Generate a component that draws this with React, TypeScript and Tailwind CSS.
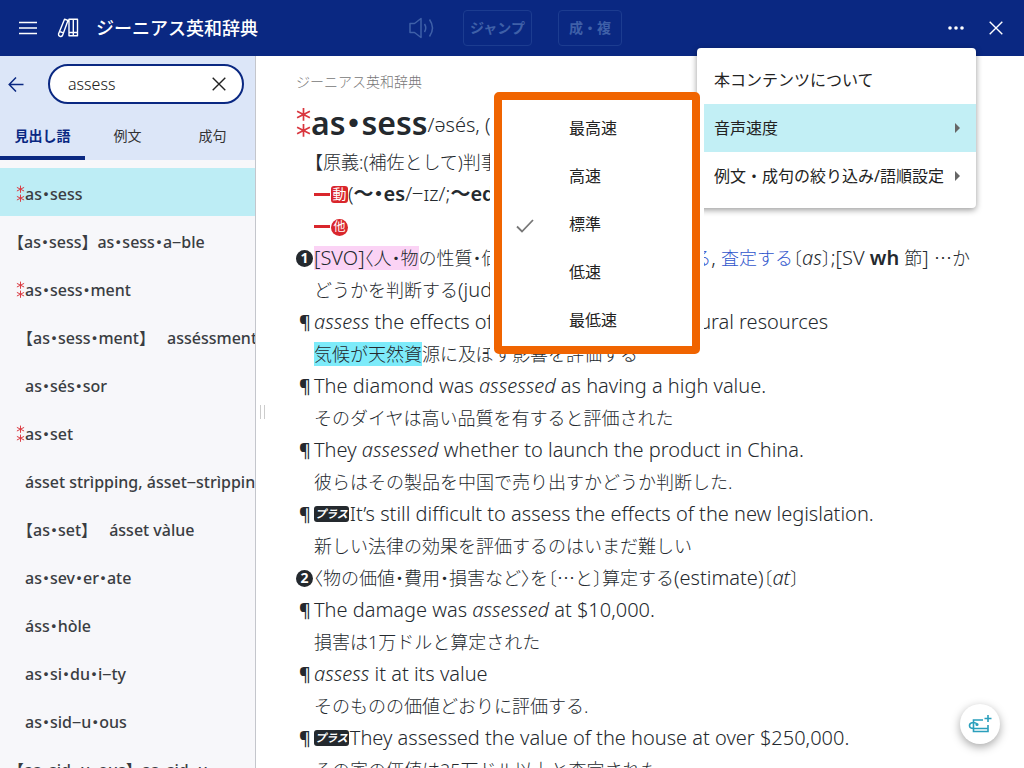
import React from 'react';

interface Entry {
    label: string;
    starred?: boolean;
    outdent?: boolean;
}

const entries: Entry[] = [
    { label: 'as・sess', starred: true },
    { label: '【as・sess】\u2002as・sess・a‒ble', outdent: true },
    { label: 'as・sess・ment', starred: true },
    { label: '【as・sess・ment】　 asséssment' },
    { label: 'as・sés・sor' },
    { label: 'as・set', starred: true },
    { label: 'ásset strìpping, ásset‒strìpping' },
    { label: '【as・set】　 ásset vàlue' },
    { label: 'as・sev・er・ate' },
    { label: 'áss・hòle' },
    { label: 'as・si・du・i‒ty' },
    { label: 'as・sid‒u・ous' },
    { label: '【as・sid‒u・ous】\u2002as・sid‒u', outdent: true },
];

const speeds = ['最高速', '高速', '標準', '低速', '最低速'];

const StarMark: React.FC<{ className: string }> = ({ className }) => (
    <svg viewBox="0 0 14 30" fill="none" stroke="#d9363e" strokeWidth="1.6" className={className} aria-hidden="true">
        <path d="M7 1v12M1 4l12 6M13 4l-12 6M7 16v12M1 19l12 6M13 19l-12 6" />
    </svg>
);

const CloseIcon: React.FC<{ className: string }> = ({ className }) => (
    <svg viewBox="0 0 14 14" fill="none" stroke="currentColor" strokeWidth="1.4" className={className} aria-hidden="true">
        <path d="M.7.7l12.6 12.6M13.3.7L.7 13.3" />
    </svg>
);

// Latin runs are set larger than the Japanese around them
const En: React.FC<{ children: React.ReactNode }> = ({ children }) => <span className="text-xl leading-none">{children}</span>;

const Line: React.FC<{ mark?: React.ReactNode; children: React.ReactNode }> = ({ mark, children }) => (
    <div className="flex h-8 items-center whitespace-nowrap">
        <span className="flex w-[18px] shrink-0 items-center">{mark}</span>
        <p className="leading-8">{children}</p>
    </div>
);

const Para = () => <span className="pl-[3px] font-medium">¶</span>;

const Dots = () => <span className="font-['Noto_Sans_CJK_JP',sans-serif] leading-none">…</span>;

const Dash = () => <span className="inline-block h-[3px] w-4 bg-[#d9262c] align-[5px]" />;

const SenseNo: React.FC<{ n: number }> = ({ n }) => (
    <span className="flex size-[17px] items-center justify-center rounded-full bg-[#24292e] text-sm leading-none font-bold text-white">{n}</span>
);

const Plus = () => (
    <span className="mr-px inline-flex h-4 items-center rounded-[3px] bg-[#24292e] px-px align-[3px] text-[11px] leading-none font-bold text-white italic">プラス</span>
);

const Header = () => (
    <header className="flex h-14 shrink-0 items-center bg-[#0a2882] text-white">
        <button aria-label="メニュー" className="ml-[19px]">
            <svg viewBox="0 0 18 14" stroke="currentColor" strokeWidth="1.4" className="h-[14px] w-[18px]">
                <path d="M0 1.5h18M0 7h18M0 12.5h18" />
            </svg>
        </button>
        <svg viewBox="0 0 22 20" fill="none" stroke="currentColor" strokeWidth="1.4" strokeLinejoin="round" className="ml-5 h-5 w-[22px]">
            <path d="M7.5 1.2l3.5 1.3L5.5 17.5a2.2 2.2 0 0 1-4-1.5zM2.6 13.5l3.8 1.3M12 1.2h8.5v16.5H12zM16.3 1.2v16.5M12 14.5h8.5" />
        </svg>
        <h1 className="ml-[17px] text-lg font-medium">ジーニアス英和辞典</h1>
        <div className="ml-[151px] flex items-center text-[#3f60a8]">
            <button disabled aria-label="音声">
                <svg viewBox="0 0 26 22" fill="none" stroke="currentColor" strokeWidth="1.5" strokeLinejoin="round" className="h-[22px] w-[26px]">
                    <path d="M1 6.5h4.5L12 1.5v19L5.5 15.5H1zM15.5 7q2.5 4 0 8M20.5 2.5q6 8.5 0 17" />
                </svg>
            </button>
            <button disabled className="ml-7 h-9 rounded-[4px] border border-[#1c3c90] px-[6px] text-sm font-bold">ジャンプ</button>
            <button disabled className="ml-[26px] h-9 rounded-[4px] border border-[#1c3c90] px-[10px] text-sm font-bold">成・複</button>
        </div>
        <button aria-label="その他" className="ml-auto">
            <svg viewBox="0 0 16 4" fill="currentColor" className="h-1 w-4">
                <circle cx="2" cy="2" r="1.8" />
                <circle cx="8" cy="2" r="1.8" />
                <circle cx="14" cy="2" r="1.8" />
            </svg>
        </button>
        <button aria-label="閉じる" className="mr-[21px] ml-[25px]">
            <CloseIcon className="size-[14px]" />
        </button>
    </header>
);

const Sidebar = () => (
    <aside className="flex w-64 shrink-0 flex-col overflow-hidden border-r border-[#c4c6cc] bg-[#f7f7fa]">
        <div className="bg-[#dce6f8]">
            <div className="flex items-center pt-2 pr-[11px] pl-2">
                <button aria-label="戻る" className="text-[#0a2882]">
                    <svg viewBox="0 0 16 16" fill="none" stroke="currentColor" strokeWidth="1.5" className="size-4">
                        <path d="M15.5 8.5H1.5M8 1.5L1.2 8.5l6.800 7" />
                    </svg>
                </button>
                <div className="ml-6 flex h-10 flex-1 items-center rounded-full border-2 border-[#0a2882] bg-white pr-4 pl-[18px]">
                    <input aria-label="検索語" defaultValue="assess" className="w-0 flex-1 text-base font-light text-[#222] outline-none" />
                    <button aria-label="クリア" className="text-[#222]">
                        <CloseIcon className="size-[14px]" />
                    </button>
                </div>
            </div>
            <div role="tablist" className="mt-2 grid h-12 grid-cols-3 text-sm text-[#333]">
                <button role="tab" aria-selected="true" className="border-b-4 border-[#0a2882] pt-1 font-bold text-[#0a2882]">見出し語</button>
                <button role="tab" aria-selected="false">例文</button>
                <button role="tab" aria-selected="false">成句</button>
            </div>
        </div>
        <ul className="mt-2 text-base font-medium text-[#3a3d42]">
            {entries.map((entry, i) => (
                <li key={entry.label} className={i === 0 ? 'bg-[#bdedf5]' : ''}>
                    <button className="flex h-12 w-full items-center pt-1 pl-4 text-left whitespace-nowrap [font-feature-settings:'halt']">
                        {!entry.outdent && (
                            <span className="w-[9px] shrink-0">
                                {entry.starred && <StarMark className="h-[18px] w-[9px]" />}
                            </span>
                        )}
                        {entry.label}
                    </button>
                </li>
            ))}
        </ul>
    </aside>
);

const Article = () => (
    <article className="min-w-0 flex-1 overflow-hidden pt-4 pl-7 text-lg font-light text-[#24292e] [font-feature-settings:'halt']">
        <p className="text-sm leading-5 text-[#777]">ジーニアス英和辞典</p>
        <div className="flex h-[54px] items-center pt-2 whitespace-nowrap">
            <StarMark className="h-8 w-[15px]" />
            <h2 className="text-[32px] font-semibold">as・sess</h2>
            <span className="pt-1 text-xl">/əsés, (米) æsés/</span>
        </div>
        <Line>【原義:(補佐として)判事の横に座る】</Line>
        <Line>
            <Dash />
            <span className="ml-px inline-flex size-[17px] items-center justify-center rounded-[3px] bg-[#d9262c] align-[2px] text-sm leading-none font-normal text-white">動</span>
            <En>(<b className="font-semibold">〜・es</b>/‒ɪz/;<b className="font-semibold">〜ed</b>/‒t/)</En>
        </Line>
        <Line>
            <Dash />
            <span className="ml-px inline-flex size-[17px] items-center justify-center rounded-full bg-[#d9262c] align-[2px] text-xs leading-none font-normal text-white">他</span>
        </Line>
        <Line mark={<SenseNo n={1} />}>
            <mark className="bg-[#fbd3f5] text-inherit"><En>[SVO]</En>〈人・物</mark>の性質・価値などを〉 〔<Dots />と〕<span className="text-[#2f55cc]">評価する</span><En>, </En><span className="text-[#2f55cc]">査定する</span>〔<En><i>as</i></En>〕<En>;[SV <b className="font-semibold">wh</b> </En>節<En>] </En><Dots />か
        </Line>
        <Line>どうかを判断する<En>(judge)</En></Line>
        <Line mark={<Para />}><En><i>assess</i> the effects of climate change on natural resources</En></Line>
        <Line><mark className="bg-[#7debfa] text-inherit">気候が天然資</mark>源に及ぼす影響を評価する</Line>
        <Line mark={<Para />}><En>The diamond was <i>assessed</i> as having a high value.</En></Line>
        <Line>そのダイヤは高い品質を有すると評価された</Line>
        <Line mark={<Para />}><En>They <i>assessed</i> whether to launch the product in China.</En></Line>
        <Line>彼らはその製品を中国で売り出すかどうか判断した.</Line>
        <Line mark={<Para />}><Plus /><En>It’s still difficult to assess the effects of the new legislation.</En></Line>
        <Line>新しい法律の効果を評価するのはいまだ難しい</Line>
        <Line mark={<SenseNo n={2} />}>〈物の価値・費用・損害など〉を〔<Dots />と〕算定する<En>(estimate)</En>〔<En><i>at</i></En>〕</Line>
        <Line mark={<Para />}><En>The damage was <i>assessed</i> at $10,000.</En></Line>
        <Line>損害は1万ドルと算定された</Line>
        <Line mark={<Para />}><En><i>assess</i> it at its value</En></Line>
        <Line>そのものの価値どおりに評価する.</Line>
        <Line mark={<Para />}><Plus /><En>They assessed the value of the house at over $250,000.</En></Line>
        <Line>その家の価値は25万ドル以上と査定された</Line>
    </article>
);

const Arrow = () => (
    <svg viewBox="0 0 5 10" fill="#666" className="h-[10px] w-[5px]" aria-hidden="true">
        <path d="M0 0l5 5-5 5z" />
    </svg>
);

const OptionsMenu = () => (
    <div role="menu" className="absolute top-12 right-12 w-[279px] rounded-[4px] bg-white py-2 text-base text-[#222] shadow-[0_2px_6px_rgba(0,0,0,0.4)]">
        <button role="menuitem" className="flex h-12 w-full items-center pr-4 pl-[17px]">本コンテンツについて</button>
        <button role="menuitem" className="flex h-12 w-full items-center justify-between bg-[#c2eff5] pr-4 pl-[17px]">音声速度<Arrow /></button>
        <button role="menuitem" className="flex h-12 w-full items-center justify-between pr-4 pl-[17px] whitespace-nowrap">例文・成句の絞り込み/語順設定<Arrow /></button>
        <div role="menu" className="absolute top-11 right-[276px] w-[206px] rounded-[5px] border-8 border-[#f06400] bg-white pt-1 pb-0.5 shadow-[-4px_0_0_#fff,4px_0_0_#fff]">
            {speeds.map((speed) => (
                <button key={speed} role="menuitemradio" aria-checked={speed === '標準'} className="flex h-12 w-full items-center pl-[14px]">
                    <span className="w-[53px]">
                        {speed === '標準' && (
                            <svg viewBox="0 0 18 14" fill="none" stroke="#777" strokeWidth="1.8" className="mt-1 h-[14px] w-[18px]">
                                <path d="M1 7.5l5 5L17 1" />
                            </svg>
                        )}
                    </span>
                    {speed}
                </button>
            ))}
        </div>
    </div>
);

const App: React.FC = () => {
    return (
        <div className="relative flex h-screen flex-col overflow-hidden bg-white font-['Noto_Sans','Noto_Sans_CJK_JP',sans-serif]">
            <Header />
            <main className="flex min-h-0 flex-1">
                <Sidebar />
                <div className="flex w-3 shrink-0 items-center justify-center">
                    <span className="h-[14px] w-[5px] border-x border-[#ccc]" />
                </div>
                <Article />
            </main>
            <OptionsMenu />
            <button aria-label="単語帳に追加" className="absolute right-6 bottom-6 flex size-10 items-center justify-center rounded-full bg-white shadow-[0_3px_10px_rgba(0,0,0,0.35)]">
                <svg viewBox="0 0 24 20" fill="none" stroke="#2a9fbc" strokeWidth="1.6" className="h-5 w-6">
                    <path d="M15 6H5.5v11.5H20V11M5.5 14.5H20M20 1v7M16.5 4.5h7M9 10.5C8 7.5 1.5 8 1.5 11.5c0 2 1.5 3 4 3" />
                    <circle cx="9" cy="10.5" r=".8" />
                </svg>
            </button>
        </div>
    );
};

export default App;
